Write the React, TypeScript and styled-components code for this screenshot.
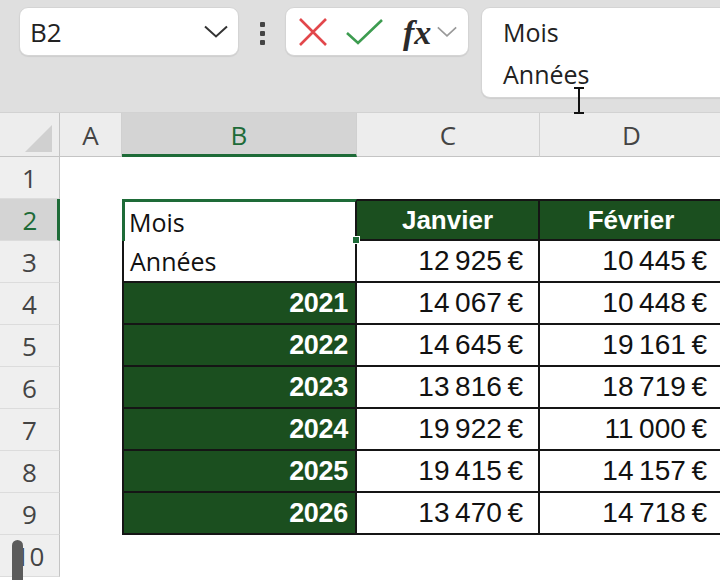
import React from 'react'
import styled, { createGlobalStyle } from 'styled-components'

const GREEN = '#1b4f1f'
const SELECT = '#1e6b38'
const UI_FONT = '"Open Sans", "Noto Sans", sans-serif'
const NUM_FONT = '"Liberation Sans", Arial, sans-serif'

const GlobalStyle = createGlobalStyle`
  html, body {
    margin: 0;
    padding: 0;
    background: #ffffff;
    overflow: hidden;
  }
  body {
    font-family: ${UI_FONT};
  }
`

const Page = styled.div`
  position: relative;
  width: 720px;
  height: 580px;
  overflow: hidden;
`

const Toolbar = styled.header`
  display: flex;
  align-items: flex-start;
  height: 113px;
  box-sizing: border-box;
  padding: 7px 0 0 19px;
  background: #dfdfdf;
  border-bottom: 1px solid #d2d2d2;
  overflow: hidden;
`

const Box = styled.div`
  display: flex;
  align-items: center;
  box-sizing: border-box;
  background: #ffffff;
  border: 1px solid #d4d4d4;
  border-radius: 9px;
  box-shadow: 0 1px 1px rgba(0, 0, 0, 0.08);
`

const NameBox = styled(Box)`
  width: 220px;
  height: 49px;
  padding: 0 10px 0 10px;
  justify-content: space-between;
  font-size: 26px;
  color: #222;
`

const Dots = styled.div`
  display: flex;
  flex-direction: column;
  gap: 4px;
  margin: 15px 20px 0 21px;
  span {
    width: 5px;
    height: 5px;
    border-radius: 1px;
    background: #444;
  }
`

const Actions = styled(Box)`
  width: 184px;
  height: 49px;
  padding: 0 4px 0 12px;
`

const Fx = styled.span`
  font-family: "Liberation Serif", "Times New Roman", serif;
  font-style: italic;
  font-weight: bold;
  font-size: 34px;
  color: #2b2b2b;
  margin: 2px 6px 0 18px;
`

const FormulaInput = styled(Box)`
  flex: 1;
  height: 91px;
  margin: 0 -20px 0 12px;
  padding: 0 21px;
  flex-direction: column;
  align-items: flex-start;
  justify-content: center;
  font-size: 25px;
  line-height: 42px;
  color: #222;
`

const Sheet = styled.div`
  display: grid;
  grid-template-columns: 60px 62px 235px 183px 184px;
  grid-template-rows: 44px;
  grid-auto-rows: 42px;
  width: 724px;
`

const ColHeader = styled.div<{ $active?: boolean }>`
  display: flex;
  align-items: center;
  justify-content: center;
  box-sizing: border-box;
  background: ${p => (p.$active ? '#d4d4d4' : '#ededed')};
  border-right: 1px solid #d0d0d0;
  border-bottom: ${p => (p.$active ? `3px solid ${SELECT}` : '1px solid #c4c4c4')};
  font-size: 26px;
  color: ${p => (p.$active ? SELECT : '#444')};
  padding-top: ${p => (p.$active ? '2px' : '0')};
`

const Corner = styled(ColHeader)`
  position: relative;
  border-right: 1px solid #c4c4c4;
  &::after {
    content: '';
    position: absolute;
    right: 7px;
    bottom: 4px;
    border-style: solid;
    border-width: 0 0 27px 27px;
    border-color: transparent transparent #d0d0d0 transparent;
  }
`

const RowHeader = styled.div<{ $active?: boolean }>`
  display: flex;
  align-items: center;
  justify-content: center;
  box-sizing: border-box;
  background: ${p => (p.$active ? '#d4d4d4' : '#efefef')};
  border-right: ${p => (p.$active ? `3px solid ${SELECT}` : '1px solid #c4c4c4')};
  border-bottom: 1px solid #dcdcdc;
  font-size: 26px;
  color: ${p => (p.$active ? SELECT : '#444')};
  padding-left: ${p => (p.$active ? '3px' : '0')};
`

const Cell = styled.div<{
  $fill?: 'green' | 'white'
  $align?: 'left' | 'right' | 'center'
  $bold?: boolean
  $top?: boolean
  $left?: boolean
  $edge?: boolean
}>`
  display: flex;
  align-items: center;
  box-sizing: border-box;
  justify-content: ${p =>
    p.$align === 'right' ? 'flex-end' : p.$align === 'center' ? 'center' : 'flex-start'};
  padding: 0 ${p => (p.$align === 'right' ? (p.$fill === 'green' ? '7px' : '15px') : '6px')};
  background: ${p => (p.$fill === 'green' ? GREEN : '#ffffff')};
  color: ${p => (p.$fill === 'green' ? '#ffffff' : '#111')};
  font-family: ${NUM_FONT};
  font-weight: ${p => (p.$bold ? 'bold' : 'normal')};
  font-size: ${p => (p.$bold ? '27px' : '28px')};
  letter-spacing: -0.3px;
  ${p =>
    p.$edge &&
    `
    border-right: 2px solid #151515;
    border-bottom: 2px solid #151515;
  `}
  ${p => p.$top && 'border-top: 2px solid #151515;'}
  ${p => p.$left && 'border-left: 2px solid #151515;'}
`

const HeadCell = styled(Cell)`
  font-size: 26px;
  letter-spacing: 0;
`

const TextCell = styled(Cell)`
  font-family: ${UI_FONT};
  font-size: 25px;
  letter-spacing: 0;
`

const ActiveCell = styled(TextCell)`
  position: relative;
  border-top: 3px solid ${SELECT};
  border-left: 3px solid ${SELECT};
  border-right: 2px solid #151515;
  padding-left: 4px;
  padding-top: 1px;
`

const FillHandle = styled.span`
  position: absolute;
  right: -5px;
  bottom: -3px;
  width: 6px;
  height: 6px;
  background: ${SELECT};
  border: 1px solid #ffffff;
`

const Empty = styled.div`
  background: #ffffff;
`

const ScrollThumb = styled.div`
  position: absolute;
  left: 12px;
  top: 540px;
  width: 11px;
  height: 60px;
  border-radius: 6px;
  background: #5b5b5b;
`

const Cursor = styled.svg`
  position: absolute;
  left: 572px;
  top: 87px;
`

const euro = (v: string) => v.replace(' ', '\u202F') + '\u202F€'

const rows: [string, string, string][] = [
  ['2021', '14 067', '10 448'],
  ['2022', '14 645', '19 161'],
  ['2023', '13 816', '18 719'],
  ['2024', '19 922', '11 000'],
  ['2025', '19 415', '14 157'],
  ['2026', '13 470', '14 718'],
]

const Chevron: React.FC<{ color: string; w: number }> = ({ color, w }) => (
  <svg width={w} height={w / 2 + 2} viewBox="0 0 24 13">
    <polyline points="1,1 12,11 23,1" fill="none" stroke={color} strokeWidth="2" />
  </svg>
)

const App: React.FC = () => (
  <Page>
    <GlobalStyle />
    <Toolbar>
      <NameBox>
        <span>B2</span>
        <Chevron color="#333" w={24} />
      </NameBox>
      <Dots>
        <span />
        <span />
        <span />
      </Dots>
      <Actions>
        <svg width="30" height="30" viewBox="0 0 30 30">
          <path d="M2 2 L28 28 M28 2 L2 28" stroke="#e2474b" strokeWidth="2.6" fill="none" />
        </svg>
        <svg width="40" height="28" viewBox="0 0 40 28" style={{ marginLeft: 17 }}>
          <path d="M2 15 L13 25 L37 2" stroke="#3d9c50" strokeWidth="2.6" fill="none" />
        </svg>
        <Fx>fx</Fx>
        <Chevron color="#999" w={20} />
      </Actions>
      <FormulaInput>
        <span>Mois</span>
        <span>Années</span>
      </FormulaInput>
    </Toolbar>

    <Sheet>
      <Corner />
      <ColHeader>A</ColHeader>
      <ColHeader $active>B</ColHeader>
      <ColHeader>C</ColHeader>
      <ColHeader>D</ColHeader>

      <RowHeader>1</RowHeader>
      <Empty />
      <Empty />
      <Empty />
      <Empty />

      <RowHeader $active>2</RowHeader>
      <Empty />
      <ActiveCell>
        Mois
        <FillHandle />
      </ActiveCell>
      <HeadCell $fill="green" $align="center" $bold $top $edge>Janvier</HeadCell>
      <HeadCell $fill="green" $align="center" $bold $top $edge>Février</HeadCell>

      <RowHeader>3</RowHeader>
      <Empty />
      <TextCell $left $edge>Années</TextCell>
      <Cell $align="right" $edge>{euro('12 925')}</Cell>
      <Cell $align="right" $edge>{euro('10 445')}</Cell>

      {rows.map(([year, jan, feb], i) => (
        <React.Fragment key={year}>
          <RowHeader>{i + 4}</RowHeader>
          <Empty />
          <Cell $fill="green" $align="right" $bold $left $edge>{year}</Cell>
          <Cell $align="right" $edge>{euro(jan)}</Cell>
          <Cell $align="right" $edge>{euro(feb)}</Cell>
        </React.Fragment>
      ))}

      <RowHeader>10</RowHeader>
      <Empty />
      <Empty />
      <Empty />
      <Empty />
    </Sheet>

    <ScrollThumb />
    <Cursor width="14" height="27" viewBox="0 0 14 27">
      <path d="M2 1 H12 M7 1 V26 M2 26 H12" stroke="#111" strokeWidth="2" fill="none" />
    </Cursor>
  </Page>
)

export default App
